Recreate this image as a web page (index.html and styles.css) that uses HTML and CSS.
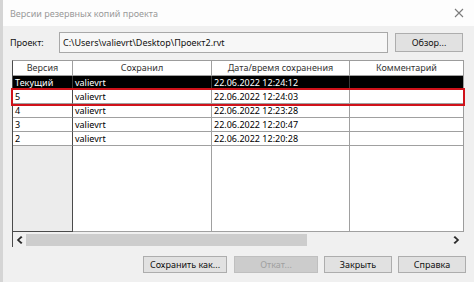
FILE: index.html
```html
<!DOCTYPE html>
<html lang="ru">
<head>
<meta charset="utf-8">
<link rel="stylesheet" href="styles.css">
</head>
<body>
<div class="window">
  <div class="titlebar">
    <span class="title">Версии резервных копий проекта</span>
    <svg class="close" width="10" height="10" viewBox="0 0 10 10"><path d="M1 1L9 9M9 1L1 9" stroke="#7c7c7c" stroke-width="1.1" fill="none"/></svg>
  </div>
  <div class="content">
    <div class="project">
      <span class="label">Проект:</span>
      <div class="path">C:\Users\valievrt\Desktop\Проект2.rvt</div>
      <button class="btn browse">Обзор...</button>
    </div>
    <div class="table">
      <div class="grid">
        <div class="row head">
          <div class="c c1">Версия</div><div class="c c2">Сохранил</div><div class="c c3">Дата/время сохранения</div><div class="c c4">Комментарий</div>
        </div>
        <div class="row sel">
          <div class="c c1">Текущий</div><div class="c c2">valievrt</div><div class="c c3">22.06.2022 12:24:12</div><div class="c c4"></div>
        </div>
        <div class="row mark">
          <div class="c c1">5</div><div class="c c2">valievrt</div><div class="c c3">22.06.2022 12:24:03</div><div class="c c4"></div>
        </div>
        <div class="row">
          <div class="c c1">4</div><div class="c c2">valievrt</div><div class="c c3">22.06.2022 12:23:28</div><div class="c c4"></div>
        </div>
        <div class="row">
          <div class="c c1">3</div><div class="c c2">valievrt</div><div class="c c3">22.06.2022 12:20:47</div><div class="c c4"></div>
        </div>
        <div class="row">
          <div class="c c1">2</div><div class="c c2">valievrt</div><div class="c c3">22.06.2022 12:20:28</div><div class="c c4"></div>
        </div>
        <div class="row filler">
          <div class="c c1"></div><div class="c c2"></div><div class="c c3"></div><div class="c c4"></div>
        </div>
      </div>
      <div class="hscroll">
        <svg class="arrow" width="7" height="8" viewBox="0 0 7 8"><polygon points="5,0 6.5,1.2 3.2,4 6.5,6.8 5,8 0.8,4" fill="#2a2a2a"/></svg>
        <div class="track"><div class="thumb"></div></div>
        <svg class="arrow" width="7" height="8" viewBox="0 0 7 8"><polygon points="2,0 0.5,1.2 3.8,4 0.5,6.8 2,8 6.2,4" fill="#2a2a2a"/></svg>
      </div>
    </div>
    <div class="actions">
      <button class="btn wide">Сохранить как...</button>
      <button class="btn wide" disabled>Откат...</button>
      <button class="btn">Закрыть</button>
      <button class="btn">Справка</button>
    </div>
  </div>
</div>
</body>
</html>
```

FILE: styles.css
```css
* { box-sizing: border-box; }
html, body { margin: 0; padding: 0; }
body {
  width: 474px;
  height: 282px;
  overflow: hidden;
  background: #f0f0f0;
  font-family: "Noto Sans", "Open Sans", sans-serif;
  font-size: 9px;
  color: #000;
}
.window {
  height: 282px;
  display: flex;
  flex-direction: column;
  border-left: 3px solid #d5d5d5;
}
.titlebar {
  height: 26px;
  background: #fdfdfd;
  display: flex;
  align-items: center;
  justify-content: space-between;
  padding: 0 10px 0 7px;
}
.title { color: #9a9a9a; font-size: 9px; }
.close { display: block; flex: none; }
.content {
  display: flex;
  flex-direction: column;
  padding: 6px 0 0 7px;
}
.project {
  display: flex;
  align-items: center;
  height: 21px;
}
.label { width: 49px; color: #111; }
.path {
  width: 329px;
  height: 21px;
  border: 1px solid #a8a8a8;
  background: #f7f7f7;
  padding: 0 3px;
  display: flex;
  align-items: center;
  color: #111;
}
.btn {
  font-family: inherit;
  font-size: 9px;
  height: 17px;
  width: 68px;
  background: #e1e1e1;
  border: 1px solid #adadad;
  color: #111;
  padding: 0;
  margin: 0;
}
.btn:disabled { background: #cccccc; border-color: #bfbfbf; color: #a0a0a0; }
.browse { margin-left: 7px; height: 19px; }
.table {
  margin: 7px 0 0 2px;
  width: 452px;
  display: flex;
  flex-direction: column;
}
.grid {
  height: 172px;
  display: flex;
  flex-direction: column;
  border-top: 1px solid #9c9c9c;
  border-left: 1px solid #4a4a4a;
  border-right: 1px solid #9c9c9c;
  background: #fff;
}
.row {
  display: flex;
  height: 14px;
  flex: none;
}
.row.head { height: 15px; }
.c {
  height: 100%;
  border-right: 1px solid #a0a0a0;
  border-bottom: 1px solid #a0a0a0;
  padding-left: 2px;
  line-height: 13px;
  white-space: nowrap;
  overflow: hidden;
}
.c1 { width: 60px; border-right-color: #4a4a4a; }
.c2 { width: 139px; }
.c3 { width: 138px; }
.c4 { flex: 1; border-right: none; }
.head .c { text-align: center; padding-left: 0; color: #333; background: #fff; line-height: 14px; }
.head .c1 { border-right-color: #a0a0a0; }
.sel .c { background: #000; color: #fff; border-color: #3a3a3a; }
.mark { outline: 2px solid #d0121a; outline-offset: 0; position: relative; z-index: 1; }
.filler { flex: 1; }
.filler .c { border-bottom: 1px solid #a0a0a0; }
.filler .c1 { background: #ececec; border-bottom-color: #4a4a4a; }
.hscroll {
  height: 15px;
  display: flex;
  align-items: center;
  border-left: 1px solid #4a4a4a;
  background: #f0f0f0;
  padding: 0 4px 0 3px;
  gap: 3px;
}
.arrow { flex: none; display: block; }
.track { flex: 1; height: 12px; display: flex; }
.thumb { width: 281px; height: 12px; background: #cdcdcd; }
.actions {
  display: flex;
  justify-content: flex-end;
  gap: 6px;
  margin-top: 9px;
  padding-right: 8px;
}
.actions .wide { width: 84px; }
.actions .wide:first-child { margin-right: 1px; }
```
